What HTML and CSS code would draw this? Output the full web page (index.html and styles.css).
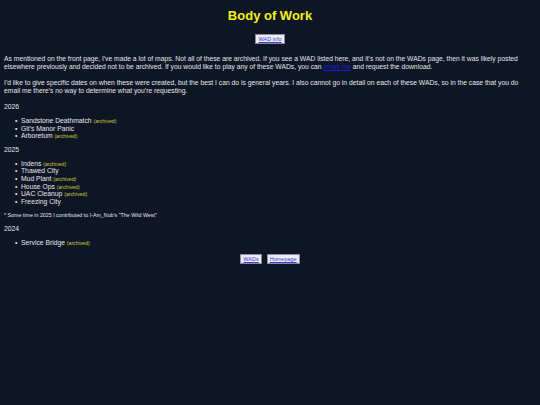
FILE: index.html
```html
<!DOCTYPE html>
<html>
<head>
<meta charset="utf-8">
<title>Body of Work</title>
<link rel="stylesheet" href="styles.css">
</head>
<body>
<h1 class="title">Body of Work</h1>
<nav class="nav nav-top"><a class="btn" href="#">WAD info</a></nav>
<p class="text">As mentioned on the front page, I've made a lot of maps. Not all of these are archived. If you see a WAD listed here, and it's not on the WADs page, then it was likely posted elsewhere previously and decided not to be archived. If you would like to play any of these WADs, you can <a class="link" href="#">email me</a> and request the download.</p>
<p class="text">I'd like to give specific dates on when these were created, but the best I can do is general years. I also cannot go in detail on each of these WADs, so in the case that you do email me there's no way to determine what you're requesting.</p>
<p class="year">2026</p>
<ul class="maps">
<li>Sandstone Deathmatch <span class="tag">(archived)</span></li>
<li>Git's Manor Panic</li>
<li>Arboretum <span class="tag">(archived)</span></li>
</ul>
<p class="year">2025</p>
<ul class="maps">
<li>Indens <span class="tag">(archived)</span></li>
<li>Thawed City</li>
<li>Mud Plant <span class="tag">(archived)</span></li>
<li>House Ops <span class="tag">(archived)</span></li>
<li>UAC Cleanup <span class="tag">(archived)</span></li>
<li>Freezing City</li>
</ul>
<p class="note">* Some time in 2025 I contributed to I-Am_Nub's "The Wild West"</p>
<p class="year">2024</p>
<ul class="maps">
<li>Service Bridge <span class="tag">(archived)</span></li>
</ul>
<nav class="nav nav-bottom"><a class="btn" href="#">WADs</a><a class="btn" href="#">Homepage</a></nav>
</body>
</html>
```
FILE: styles.css
```css
html, body {
  background: #0e1625;
}
body {
  margin: 0;
  padding: 0 4px;
  color: #e4e6ea;
  font-family: "Liberation Sans", Arial, sans-serif;
  font-size: 6.75px;
  line-height: 8px;
}
.title {
  margin: 8px 0 0;
  text-align: center;
  color: #f2f21a;
  font-size: 13px;
  line-height: 16px;
  font-weight: bold;
}
.nav {
  display: flex;
  justify-content: center;
  gap: 5px;
}
.nav-top {
  margin: 10px 0 11px;
}
.nav-bottom {
  margin: 7px 0 0;
}
.btn {
  display: inline-block;
  padding: 1px 2px 0;
  height: 7px;
  line-height: 7px;
  font-size: 5.5px;
  color: #3a3acc;
  background: #ececf8;
  border: 1px solid #8a8a9a;
  text-decoration: underline;
}
.text {
  margin: 0 0 8px;
}
.link {
  color: #1c1cd0;
  text-decoration: underline;
}
.year {
  margin: 6px 0 6px;
}
.maps {
  margin: 0 0 5px;
  padding-left: 17px;
  line-height: 7.6px;
  list-style: none;
}
.maps li {
  height: 7.6px;
}
.maps li::before {
  content: "\2022";
  display: inline-block;
  width: 6px;
  margin-left: -6px;
}
.tag {
  font-size: 5.2px;
  line-height: 5px;
  color: #c9c93a;
}
.note {
  margin: 7px 0 6px;
  font-size: 5.3px;
  line-height: 7px;
}
```
